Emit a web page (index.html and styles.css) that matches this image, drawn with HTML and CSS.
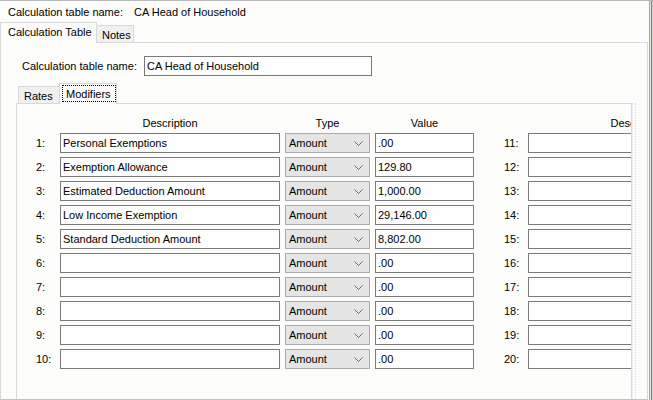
FILE: index.html
```html
<!DOCTYPE html>
<html>
<head>
<meta charset="utf-8">
<link rel="stylesheet" href="styles.css">
</head>
<body>
<div class="window">
  <div class="main">
    <div class="title-row">
      <span class="title-label">Calculation table name:</span>
      <span class="title-value">CA Head of Household</span>
    </div>
    <div class="tabs">
      <div class="tab tab-active">Calculation Table</div>
      <div class="tab tab-idle">Notes</div>
    </div>
    <div class="panel">
      <div class="name-row">
        <span class="name-label">Calculation table name:</span>
        <div class="field name-field">CA Head of Household</div>
      </div>
      <div class="subtabs">
        <div class="subtab subtab-idle">Rates</div>
        <div class="subtab subtab-active"><span class="focus">Modifiers</span></div>
      </div>
      <div class="subpanel-wrap">
        <div class="subpanel">
          <div class="grid">
            <div class="hd"></div>
            <div class="hd hd-c">Description</div>
            <div class="hd hd-c">Type</div>
            <div class="hd hd-c">Value</div>
            <div class="hd"></div>
            <div class="hd hd-c">Description</div>

            <div class="num">1:</div><div class="field">Personal Exemptions</div><div class="select">Amount<svg class="chev" width="9" height="5" viewBox="0 0 9 5"><path d="M0.5 0.5 L4.5 4.5 L8.5 0.5" fill="none" stroke="#6a6a6a" stroke-width="1"/></svg></div><div class="field">.00</div><div class="num2">11:</div><div class="field"></div>
            <div class="num">2:</div><div class="field">Exemption Allowance</div><div class="select">Amount<svg class="chev" width="9" height="5" viewBox="0 0 9 5"><path d="M0.5 0.5 L4.5 4.5 L8.5 0.5" fill="none" stroke="#6a6a6a" stroke-width="1"/></svg></div><div class="field">129.80</div><div class="num2">12:</div><div class="field"></div>
            <div class="num">3:</div><div class="field">Estimated Deduction Amount</div><div class="select">Amount<svg class="chev" width="9" height="5" viewBox="0 0 9 5"><path d="M0.5 0.5 L4.5 4.5 L8.5 0.5" fill="none" stroke="#6a6a6a" stroke-width="1"/></svg></div><div class="field">1,000.00</div><div class="num2">13:</div><div class="field"></div>
            <div class="num">4:</div><div class="field">Low Income Exemption</div><div class="select">Amount<svg class="chev" width="9" height="5" viewBox="0 0 9 5"><path d="M0.5 0.5 L4.5 4.5 L8.5 0.5" fill="none" stroke="#6a6a6a" stroke-width="1"/></svg></div><div class="field">29,146.00</div><div class="num2">14:</div><div class="field"></div>
            <div class="num">5:</div><div class="field">Standard Deduction Amount</div><div class="select">Amount<svg class="chev" width="9" height="5" viewBox="0 0 9 5"><path d="M0.5 0.5 L4.5 4.5 L8.5 0.5" fill="none" stroke="#6a6a6a" stroke-width="1"/></svg></div><div class="field">8,802.00</div><div class="num2">15:</div><div class="field"></div>
            <div class="num">6:</div><div class="field"></div><div class="select">Amount<svg class="chev" width="9" height="5" viewBox="0 0 9 5"><path d="M0.5 0.5 L4.5 4.5 L8.5 0.5" fill="none" stroke="#6a6a6a" stroke-width="1"/></svg></div><div class="field">.00</div><div class="num2">16:</div><div class="field"></div>
            <div class="num">7:</div><div class="field"></div><div class="select">Amount<svg class="chev" width="9" height="5" viewBox="0 0 9 5"><path d="M0.5 0.5 L4.5 4.5 L8.5 0.5" fill="none" stroke="#6a6a6a" stroke-width="1"/></svg></div><div class="field">.00</div><div class="num2">17:</div><div class="field"></div>
            <div class="num">8:</div><div class="field"></div><div class="select">Amount<svg class="chev" width="9" height="5" viewBox="0 0 9 5"><path d="M0.5 0.5 L4.5 4.5 L8.5 0.5" fill="none" stroke="#6a6a6a" stroke-width="1"/></svg></div><div class="field">.00</div><div class="num2">18:</div><div class="field"></div>
            <div class="num">9:</div><div class="field"></div><div class="select">Amount<svg class="chev" width="9" height="5" viewBox="0 0 9 5"><path d="M0.5 0.5 L4.5 4.5 L8.5 0.5" fill="none" stroke="#6a6a6a" stroke-width="1"/></svg></div><div class="field">.00</div><div class="num2">19:</div><div class="field"></div>
            <div class="num">10:</div><div class="field"></div><div class="select">Amount<svg class="chev" width="9" height="5" viewBox="0 0 9 5"><path d="M0.5 0.5 L4.5 4.5 L8.5 0.5" fill="none" stroke="#6a6a6a" stroke-width="1"/></svg></div><div class="field">.00</div><div class="num2">20:</div><div class="field"></div>
          </div>
        </div>
        <div class="subscroll"></div>
      </div>
    </div>
  </div>
  <div class="edge edge1"></div>
  <div class="edge edge2"></div>
  <div class="edge edge3"></div>
  <div class="edge edge4"></div>
</div>
</body>
</html>
```
FILE: styles.css
```css
html, body {
  margin: 0;
  padding: 0;
}
body {
  width: 653px;
  height: 400px;
  overflow: hidden;
  background: #fcfdfb;
  font-family: "Liberation Sans", Arial, sans-serif;
  font-size: 11px;
  color: #000;
}
.window {
  display: flex;
  height: 400px;
  border-top: 1px solid #b9b9b9;
  box-sizing: border-box;
}
.main {
  width: 649px;
  display: flex;
  flex-direction: column;
}
.edge { width: 1px; height: 100%; }
.edge1 { background: #a8a8a8; }
.edge2 { background: #e6e2de; }
.edge3 { background: #8f7b6c; }
.edge4 { background: #d4d0cc; }

.title-row {
  height: 21px;
  display: flex;
  align-items: center;
  padding-left: 8px;
}
.title-value { margin-left: 11px; }

.tabs {
  height: 20px;
  display: flex;
  align-items: flex-end;
}
.tab {
  box-sizing: border-box;
  border: 1px solid #d9d9d9;
  border-bottom: none;
  display: flex;
  align-items: center;
}
.tab-active {
  width: 97px;
  height: 21px;
  margin-bottom: -1px;
  background: #fcfdfb;
  padding-left: 7px;
  padding-bottom: 2px;
  position: relative;
  z-index: 1;
}
.tab-idle {
  width: 38px;
  height: 17px;
  margin-left: -1px;
  background: #f0f0f0;
  padding-left: 5px;
  padding-top: 1px;
}

.panel {
  box-sizing: border-box;
  width: 648px;
  height: 358px;
  border: 1px solid #d9d9d9;
  border-bottom-color: #c4c4c4;
  overflow: hidden;
  display: flex;
  flex-direction: column;
}
.name-row {
  display: flex;
  align-items: center;
  margin-top: 13px;
  padding-left: 21px;
  height: 20px;
}
.name-label { width: 122px; }
.field {
  box-sizing: border-box;
  height: 20px;
  border: 1px solid #7a7a7a;
  background: #fdfefd;
  padding-left: 2px;
  display: flex;
  align-items: center;
  white-space: nowrap;
  overflow: hidden;
}
.name-field { width: 228px; }

.subtabs {
  margin-top: 7px;
  margin-left: 17px;
  height: 20px;
  display: flex;
  align-items: flex-end;
}
.subtab {
  box-sizing: border-box;
  border: 1px solid #d9d9d9;
  border-bottom: none;
  display: flex;
  align-items: center;
}
.subtab-idle {
  width: 42px;
  height: 17px;
  background: #f0f0f0;
  padding-left: 5px;
  padding-top: 2px;
}
.subtab-active {
  width: 58px;
  height: 21px;
  margin-left: -1px;
  margin-bottom: -1px;
  background: #fcfdfb;
  padding-left: 2px;
  padding-bottom: 1px;
  position: relative;
  z-index: 1;
}
.focus {
  box-sizing: border-box;
  border: 1px dotted #000;
  height: 17px;
  width: 54px;
  padding-left: 3px;
  display: flex;
  align-items: center;
}

.subpanel-wrap {
  display: flex;
  margin-left: 15px;
  flex: 1;
  min-height: 320px;
}
.subpanel {
  box-sizing: border-box;
  width: 616px;
  height: 400px;
  border: 1px solid #d9d9d9;
  overflow: hidden;
}
.subscroll {
  width: 2px;
  border-left: 1px dotted #e2dce4;
  border-right: 1px dotted #e2dce4;
}

.grid {
  display: grid;
  grid-template-columns: 19px 220px 85px 99px 44px 220px;
  grid-auto-rows: 20px;
  grid-template-rows: 12px;
  column-gap: 5px;
  row-gap: 4px;
  padding-top: 13px;
  padding-left: 19px;
}
.hd { line-height: 12px; }
.hd-c { text-align: center; }
.num {
  display: flex;
  align-items: center;
  white-space: nowrap;
}
.num2 {
  display: flex;
  align-items: center;
  padding-left: 25px;
}
.select {
  box-sizing: border-box;
  height: 20px;
  border: 1px solid #acacac;
  background: #e5e5e5;
  display: flex;
  align-items: center;
  padding-left: 3px;
  position: relative;
}
.chev {
  position: absolute;
  right: 6px;
  top: 7px;
}
```
